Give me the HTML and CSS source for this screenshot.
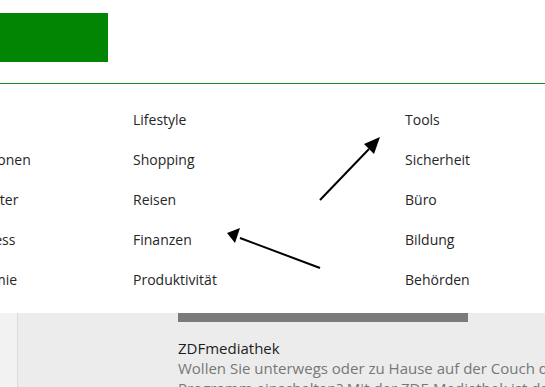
FILE: index.html
```html
<!DOCTYPE html>
<html lang="de">
<head>
    <meta charset="UTF-8">
    <meta name="viewport" content="width=device-width, initial-scale=1.0">
    <title>Store Kategorien</title>
    <link rel="stylesheet" href="styles.css">
</head>
<body>
    <header class="top">
        <div class="logo"></div>
    </header>

    <nav class="menu">
        <ul class="col col-1">
            <li>Sport</li>
            <li>Bücher &amp; Publikationen</li>
            <li>Nachrichten &amp; Wetter</li>
            <li>Gesundheit &amp; Fitness</li>
            <li>Essen &amp; Gastronomie</li>
        </ul>
        <ul class="col col-2">
            <li>Lifestyle</li>
            <li>Shopping</li>
            <li>Reisen</li>
            <li>Finanzen</li>
            <li>Produktivität</li>
        </ul>
        <ul class="col col-3">
            <li>Tools</li>
            <li>Sicherheit</li>
            <li>Büro</li>
            <li>Bildung</li>
            <li>Behörden</li>
        </ul>
    </nav>

    <div class="content">
        <aside class="side"></aside>
        <main class="main">
            <div class="banner"></div>
            <h3 class="app-title">ZDFmediathek</h3>
            <p class="app-text">Wollen Sie unterwegs oder zu Hause auf der Couch das Programm einschalten? Mit der ZDF-Mediathek ist das möglich.</p>
        </main>
    </div>

    <!-- annotation arrows -->
    <svg class="arrows" width="545" height="387" viewBox="0 0 545 387">
        <line x1="320" y1="200" x2="369" y2="149" stroke="#000" stroke-width="2"/>
        <polygon points="380,137 364,144 374,154" fill="#000"/>
        <line x1="320" y1="268" x2="240" y2="238" stroke="#000" stroke-width="2"/>
        <polygon points="227,233 240,228 235,243" fill="#000"/>
    </svg>
</body>
</html>
```

FILE: styles.css
```css
body {
    font-family: "Open Sans", "Noto Sans", sans-serif;
    margin: 0;
    padding: 0;
    background: #fff;
    color: #262626;
    overflow: hidden;
}
.top {
    height: 70px;
    padding-top: 13px;
    border-bottom: 1px solid #1f8a1f;
}
.logo {
    width: 108px;
    height: 49px;
    background: #028502;
}
.menu {
    display: grid;
    grid-template-columns: 256px 272px 1fr;
    margin-left: -123px;
    padding: 16px 0 13px;
    font-size: 14px;
}
.col {
    list-style: none;
    margin: 0;
    padding: 0;
}
.col li {
    height: 40px;
    line-height: 40px;
    white-space: nowrap;
}
.content {
    display: flex;
    height: 74px;
    overflow: hidden;
    background: #ececec;
}
.side {
    flex-shrink: 0;
    width: 17px;
    background: #f2f2f2;
    border-right: 1px solid #dadada;
}
.main {
    flex: 1;
    min-width: 0;
    padding-left: 160px;
}
.banner {
    width: 290px;
    height: 9px;
    background: #7b7b7b;
}
.app-title {
    margin: 16px 0 0;
    font-size: 15px;
    font-weight: normal;
    color: #1e1e1e;
    line-height: 20px;
}
.app-text {
    margin: 0;
    width: 420px;
    font-size: 15px;
    line-height: 20px;
    color: #777;
}
.arrows {
    position: absolute;
    left: 0;
    top: 0;
}
```
